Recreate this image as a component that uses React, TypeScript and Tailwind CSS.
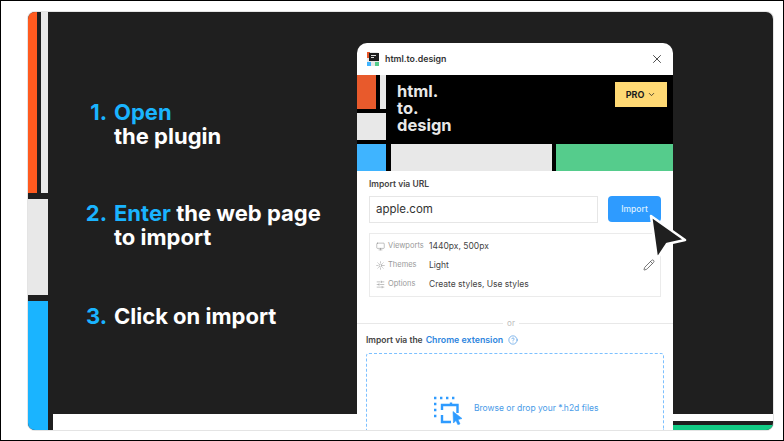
import React from "react";
import { ChevronDown, CircleHelp, Monitor, Pencil, SlidersHorizontal, Sun, X } from "lucide-react";

const heading = "font-['Inter',sans-serif] text-[22px] leading-[24px] font-bold";

const settings = [
  { label: "Viewports", value: "1440px, 500px", Icon: Monitor },
  { label: "Themes", value: "Light", Icon: Sun },
  { label: "Options", value: "Create styles, Use styles", Icon: SlidersHorizontal },
];

function Step({ n, className, children }: { n: string; className: string; children: React.ReactNode }) {
  return (
    <div className={`flex ${heading} ${className}`}>
      <span className="w-[59px] shrink-0 text-right text-[#1ab4ff]">{n}</span>
      <div className="ml-[7px] text-white">{children}</div>
    </div>
  );
}

function PluginLogo() {
  return (
    <svg width="14" height="14" viewBox="0 0 14 14">
      <rect x="1" y="0" width="12" height="14" rx="2.5" fill="#e8e8e8" />
      <rect x="1" y="0" width="3" height="6" fill="#e8572a" />
      <rect x="3" y="1" width="10" height="8" fill="#1c1c1c" />
      <rect x="1" y="10" width="4" height="4" fill="#3fb4ff" />
      <rect x="9" y="10" width="4" height="4" fill="#55cc8c" />
      <rect x="5" y="3" width="5" height="1" fill="#ddd" />
      <rect x="5" y="5" width="3" height="1" fill="#ddd" />
    </svg>
  );
}

function DropIcon() {
  return (
    <svg width="30" height="29" viewBox="0 0 30 29" fill="none" stroke="#2e9bff" strokeWidth="2.4">
      <path d="M1 2h2.4M7 2h2.4M13 2h2.4M19 2h2.4M1 8h2.4M1 14h2.4M1 20h2.4" />
      <path d="M9 14v-5h15.5v8M9 19v7h9M18 6.5v2.5" />
      <path d="M20 15.5 29 22.5 25 23.6 27 28 24.8 28.6 23 24.5 20.5 27z" fill="#2e9bff" strokeWidth="0.6" />
    </svg>
  );
}

function Plugin() {
  return (
    <div className="w-[316px] shrink-0 mt-[31px] rounded-t-[10px] bg-white font-['Inter',sans-serif] overflow-hidden h-[387px] flex flex-col">
      <div className="h-[32px] flex items-center pl-[9px] pr-[9px] shrink-0">
        <PluginLogo />
        <span className="ml-[5px] text-[8.8px] font-semibold text-[#333]">html.to.design</span>
        <X className="ml-auto text-[#333]" size={14} strokeWidth={1.5} />
      </div>

      <div className="h-[96px] shrink-0 bg-black flex flex-col">
        <div className="flex flex-1">
          <div className="w-[29px] shrink-0 flex flex-col">
            <div className="h-[34px] flex">
              <div className="w-[19px] bg-[#e85a2c]" />
              <div className="w-[6px] ml-[4px] bg-[#e8e8e8]" />
            </div>
            <div className="h-[27px] mt-[4px] bg-[#e8e8e8]" />
          </div>
          <div className="ml-[11px] mt-[8px] text-[16.5px] leading-[17px] font-bold text-[#e8e8e8]">
            html.
            <br />
            to.
            <br />
            design
          </div>
          <div className="ml-auto mr-[6px] mt-[7px] w-[52px] h-[25px] bg-[#ffd974] flex items-center justify-center text-[9px] font-bold text-[#1c1c1c]">
            PRO
            <ChevronDown className="ml-[3px]" size={9} strokeWidth={2} />
          </div>
        </div>
        <div className="h-[27px] mt-[4px] flex">
          <div className="w-[29px] bg-[#3fb4ff]" />
          <div className="w-[161px] ml-[5px] bg-[#e8e8e8]" />
          <div className="flex-1 ml-[4px] bg-[#55cc8c]" />
        </div>
      </div>

      <div className="px-[12px] pt-[8px]">
        <div className="text-[8.5px] leading-[10px] font-semibold text-[#444]">Import via URL</div>
        <div className="flex mt-[7px] gap-[10px]">
          <div className="w-[229px] h-[27px] border border-[#e6e6e6] flex items-center px-[6px] text-[11.5px] text-[#333]">
            apple.com
          </div>
          <div className="w-[53px] h-[26px] rounded-[4px] bg-[#2e9bff] flex items-center justify-center text-[8.5px] font-medium text-[#dcefff]">
            Import
          </div>
        </div>
        <div className="relative w-[292px] h-[64px] mt-[10px] border border-[#ebebeb] flex flex-col justify-center gap-[9px] pl-[6px]">
          {settings.map(({ label, value, Icon }) => (
            <div key={label} className="flex items-center h-[10px]">
              <Icon className="text-[#777]" size={9} strokeWidth={1.2} />
              <span className="ml-[3px] w-[41px] text-[7.5px] text-[#999]">{label}</span>
              <span className="text-[8.5px] text-[#444]">{value}</span>
            </div>
          ))}
          <Pencil className="absolute right-[5px] bottom-[25px] text-[#555]" size={12} strokeWidth={1.6} />
        </div>
      </div>

      <div className="flex items-center mt-[22px] h-[8px]">
        <div className="h-px w-[146px] bg-[#e8e8e8]" />
        <span className="w-[16px] text-center text-[8px] text-[#bbb]">or</span>
        <div className="h-px flex-1 bg-[#e8e8e8]" />
      </div>

      <div className="flex items-center px-[9px] mt-[8px] text-[8.5px] leading-[10px] font-semibold text-[#444]">
        Import via the
        <span className="ml-[3px] text-[8.8px] text-[#2e86de]">Chrome extension</span>
        <CircleHelp className="ml-[5px] text-[#2e86de]" size={10} strokeWidth={1.4} />
      </div>

      <div className="mx-[9px] mt-[8px] flex-1 border border-b-0 border-dashed border-[#7cc0ff] rounded-t-[3px] flex items-start pl-[66px] pt-[42px]">
        <DropIcon />
        <span className="ml-[11px] mt-[6px] text-[8.5px] text-[#4a9be8]">Browse or drop your *.h2d files</span>
      </div>
    </div>
  );
}

export default function App() {
  return (
    <div className="relative w-[784px] h-[441px] border border-black bg-white pl-[27px] pt-[11px] overflow-hidden">
      <div className="w-[745px] h-[418px] rounded-[7px] overflow-hidden bg-[#1f1f1f] flex shadow-[0_0_0_1px_#e4e4e4]">
        <div className="w-[20px] shrink-0 flex flex-col">
          <div className="h-[181px] flex shrink-0">
            <div className="w-[9px] bg-[#ff5a1f]" />
            <div className="w-[7px] ml-[4px] bg-[#e8e8e8]" />
          </div>
          <div className="h-[96px] mt-[6px] shrink-0 bg-[#e8e8e8]" />
          <div className="flex-1 mt-[6px] bg-[#1ab4ff]" />
        </div>

        <div className="w-[309px] shrink-0 flex flex-col">
          <Step n="1." className="mt-[88px]">
            <span className="text-[#1ab4ff]">Open</span>
            <br />
            the plugin
          </Step>
          <Step n="2." className="mt-[53px]">
            <span className="text-[#1ab4ff]">Enter</span> the web page
            <br />
            to import
          </Step>
          <Step n="3." className="mt-[55px]">
            Click on import
          </Step>
          <div className="mt-auto ml-[5px] h-[16px] bg-white" />
        </div>

        <Plugin />

        <div className="flex-1 flex flex-col justify-end">
          <div className="h-[7px] bg-white" />
          <div className="h-[9px] flex flex-col justify-end">
            <div className="h-[5px] bg-[#12cc85]" />
          </div>
        </div>
      </div>

      <svg className="absolute left-[646px] top-[211px]" width="44" height="52" viewBox="0 0 44 52">
        <path d="M4 4 38 28 20 32 10 47z" fill="#1f1f1f" stroke="#fff" strokeWidth="2.5" strokeLinejoin="round" />
      </svg>
    </div>
  );
}
